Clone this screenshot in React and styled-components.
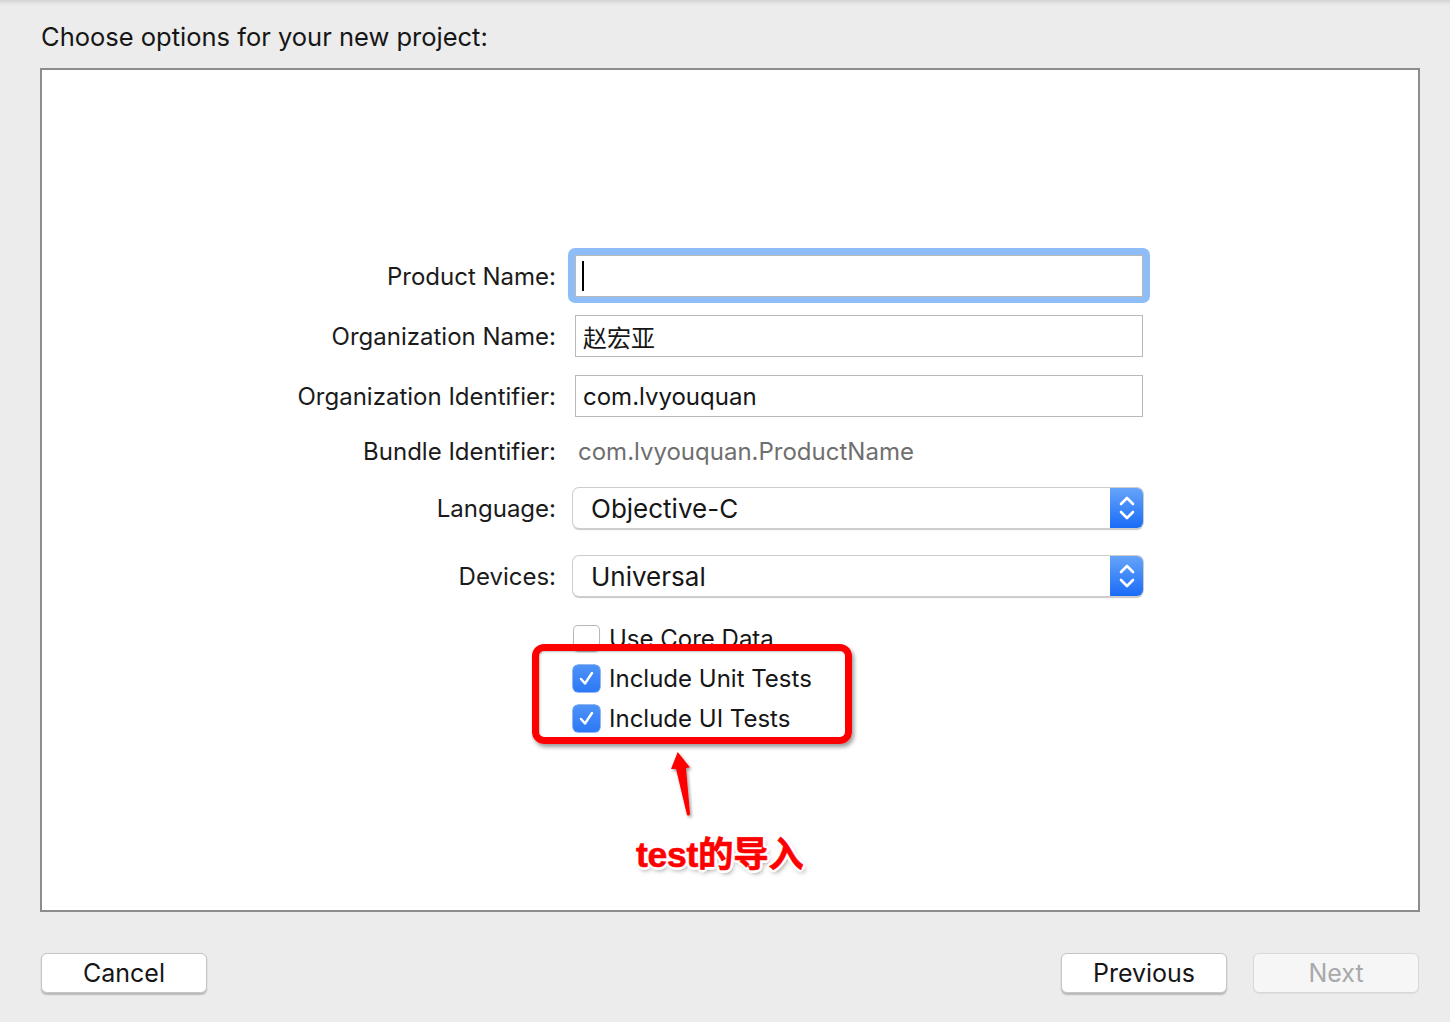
import React from "react";
import styled, { createGlobalStyle } from "styled-components";

const Global = createGlobalStyle`
  html, body { margin: 0; padding: 0; background: #ececec; }
  body { font-family: Inter, "Noto Sans", "Noto Sans CJK SC", sans-serif; color: #1b1b1b; }
  * { box-sizing: border-box; }
`;

const Page = styled.div`
  width: 1450px;
  height: 1022px;
  background: linear-gradient(#d2d2d2 0px, #e4e4e4 3px, #ececec 7px);
  display: flex;
  flex-direction: column;
  overflow: hidden;
`;

const Title = styled.h1`
  margin: 22px 0 16px 41px;
  height: 30px;
  line-height: 30px;
  font-size: 25.5px;
  font-weight: 400;
  color: #161616;
`;

const Panel = styled.div`
  position: relative;
  margin-left: 40px;
  width: 1380px;
  height: 844px;
  background: #fff;
  border: 2px solid #8d8d8d;
  padding-top: 185px;
  display: flex;
  flex-direction: column;
`;

const Row = styled.div`
  display: grid;
  grid-template-columns: 514px 570px;
  column-gap: 17px;
  align-items: center;
  height: ${(p) => p.$h}px;
  margin-top: ${(p) => p.$mt || 0}px;
`;

const Label = styled.div`
  text-align: right;
  font-size: 24px;
  color: #1b1b1b;
  white-space: nowrap;
`;

const FocusRing = styled.div`
  margin: -7px -7px -6px -5px;
  padding: 7px 7px 6px 7px;
  background: #8fbdf8;
  border-radius: 7px;
  height: 55px;
`;

const Field = styled.div`
  margin-left: ${(p) => (p.$inRing ? 0 : 2)}px;
  height: 42px;
  background: #fff;
  border: 1px solid #b9b9b9;
  display: flex;
  align-items: center;
  padding-left: 7px;
  font-size: 24px;
  color: #161616;
  font-family: Inter, "Noto Sans CJK SC", sans-serif;
`;

const Caret = styled.span`
  display: block;
  width: 2px;
  height: 30px;
  background: #000;
  margin-left: -1px;
`;

const StaticValue = styled.div`
  font-size: 24px;
  color: #6f6f6f;
  padding-left: 5px;
`;

const Popup = styled.div`
  height: 40px;
  display: flex;
  align-items: stretch;
  border-radius: 6px;
  background: #fff;
  box-shadow: 0 0 0 1px #cdcdcd, 0 1.5px 1px rgba(0, 0, 0, 0.22);
`;

const PopupText = styled.div`
  flex: 1;
  display: flex;
  align-items: center;
  padding-left: 18px;
  font-size: 26px;
  color: #161616;
`;

const Stepper = styled.div`
  width: 33px;
  border-radius: 0 6px 6px 0;
  background: linear-gradient(#66a4fa, #1a6cf7);
  display: flex;
  align-items: center;
  justify-content: center;
`;

const CheckRow = styled.div`
  display: flex;
  align-items: center;
  gap: 9px;
  font-size: 24px;
  color: #161616;
`;

const Box = styled.div`
  width: 27px;
  height: 27px;
  border-radius: 5px;
  flex: none;
  display: flex;
  align-items: center;
  justify-content: center;
  background: ${(p) => (p.$checked ? "linear-gradient(#4e93f8, #2c78f5)" : "#fff")};
  box-shadow: ${(p) =>
    p.$checked ? "0 0 0 0.5px #2a6fe0" : "inset 0 0 0 1px #b8b8b8, 0 1px 1px rgba(0,0,0,0.12)"};
`;

const Highlight = styled.div`
  position: absolute;
  left: 490px;
  top: 574px;
  width: 320px;
  height: 100px;
  border: 7px solid #ff0000;
  border-radius: 12px;
  box-shadow: 2px 3px 4px rgba(0, 0, 0, 0.4), inset 1px 1px 2px rgba(0, 0, 0, 0.25);
  pointer-events: none;
`;

const ArrowSvg = styled.svg`
  position: absolute;
  left: 623px;
  top: 676px;
  overflow: visible;
`;

const Note = styled.div`
  position: absolute;
  left: 594px;
  top: 762px;
  font-size: 35.5px;
  font-weight: 700;
  line-height: 46px;
  color: #ff0000;
  font-family: "Liberation Sans", "Noto Sans CJK SC", sans-serif;
  letter-spacing: -0.3px;
  -webkit-text-stroke: 0.6px #ff0000;
  text-shadow: -2px -2px 0 #fff, 2px -2px 0 #fff, -2px 2px 0 #fff, 2px 2px 0 #fff,
    0 -3px 0 #fff, 0 3px 0 #fff, -3px 0 0 #fff, 3px 0 0 #fff,
    2px 3px 5px rgba(0, 0, 0, 0.5);
`;

const Footer = styled.div`
  display: flex;
  align-items: center;
  padding: 41px 31px 0 41px;
  gap: 26px;
`;

const Spacer = styled.div`
  flex: 1;
`;

const Button = styled.div`
  width: 166px;
  height: 40px;
  border-radius: 6px;
  display: flex;
  align-items: center;
  justify-content: center;
  font-size: 25px;
  border: 1px solid ${(p) => (p.$disabled ? "#d8d8d8" : "#c6c6c6")};
  background: ${(p) => (p.$disabled ? "#f6f6f6" : "#fff")};
  color: ${(p) => (p.$disabled ? "#a9a9a9" : "#161616")};
  box-shadow: ${(p) =>
    p.$disabled ? "0 1px 1px rgba(0,0,0,0.06)" : "0 1.5px 1.5px rgba(0,0,0,0.22)"};
`;

const Chevrons = () => (
  <svg width="20" height="30" viewBox="0 0 20 30">
    <path d="M4 11 L10 5 L16 11" fill="none" stroke="#fff" strokeWidth="2.6" strokeLinecap="round" strokeLinejoin="round" />
    <path d="M4 19 L10 25 L16 19" fill="none" stroke="#fff" strokeWidth="2.6" strokeLinecap="round" strokeLinejoin="round" />
  </svg>
);

const Check = () => (
  <svg width="19" height="19" viewBox="0 0 19 19">
    <path d="M4 10 L8 14.5 L15 4" fill="none" stroke="#fff" strokeWidth="2.4" strokeLinecap="round" strokeLinejoin="round" />
  </svg>
);

const PopupField = ({ value }) => (
  <Popup>
    <PopupText>{value}</PopupText>
    <Stepper>
      <Chevrons />
    </Stepper>
  </Popup>
);

export default function App() {
  return (
    <>
      <Global />
      <Page>
        <Title>Choose options for your new project:</Title>
        <Panel>
          <Row $h={42}>
            <Label>Product Name:</Label>
            <FocusRing>
              <Field $inRing>
                <Caret />
              </Field>
            </FocusRing>
          </Row>
          <Row $h={42} $mt={18}>
            <Label>Organization Name:</Label>
            <Field>赵宏亚</Field>
          </Row>
          <Row $h={42} $mt={18}>
            <Label>Organization Identifier:</Label>
            <Field>com.lvyouquan</Field>
          </Row>
          <Row $h={34} $mt={17}>
            <Label>Bundle Identifier:</Label>
            <StaticValue>com.lvyouquan.ProductName</StaticValue>
          </Row>
          <Row $h={40} $mt={20}>
            <Label>Language:</Label>
            <PopupField value="Objective-C" />
          </Row>
          <Row $h={40} $mt={28}>
            <Label>Devices:</Label>
            <PopupField value="Universal" />
          </Row>
          <Row $h={27} $mt={28}>
            <span />
            <CheckRow>
              <Box />
              Use Core Data
            </CheckRow>
          </Row>
          <Row $h={27} $mt={13}>
            <span />
            <CheckRow>
              <Box $checked>
                <Check />
              </Box>
              Include Unit Tests
            </CheckRow>
          </Row>
          <Row $h={27} $mt={13}>
            <span />
            <CheckRow>
              <Box $checked>
                <Check />
              </Box>
              Include UI Tests
            </CheckRow>
          </Row>

          <Highlight />
          <ArrowSvg width="40" height="72" viewBox="0 0 40 72">
            <defs>
              <filter id="sh" x="-50%" y="-50%" width="200%" height="200%">
                <feDropShadow dx="1.5" dy="2" stdDeviation="1.5" floodColor="#000" floodOpacity="0.4" />
              </filter>
            </defs>
            <path
              d="M12.7 6 L25 21.5 L21 22 L25 68 Q24.5 70.5 22 69 L11 23 L6 23 Z"
              fill="#ff0000"
              filter="url(#sh)"
            />
          </ArrowSvg>
          <Note>test的导入</Note>
        </Panel>
        <Footer>
          <Button>Cancel</Button>
          <Spacer />
          <Button>Previous</Button>
          <Button $disabled>Next</Button>
        </Footer>
      </Page>
    </>
  );
}
